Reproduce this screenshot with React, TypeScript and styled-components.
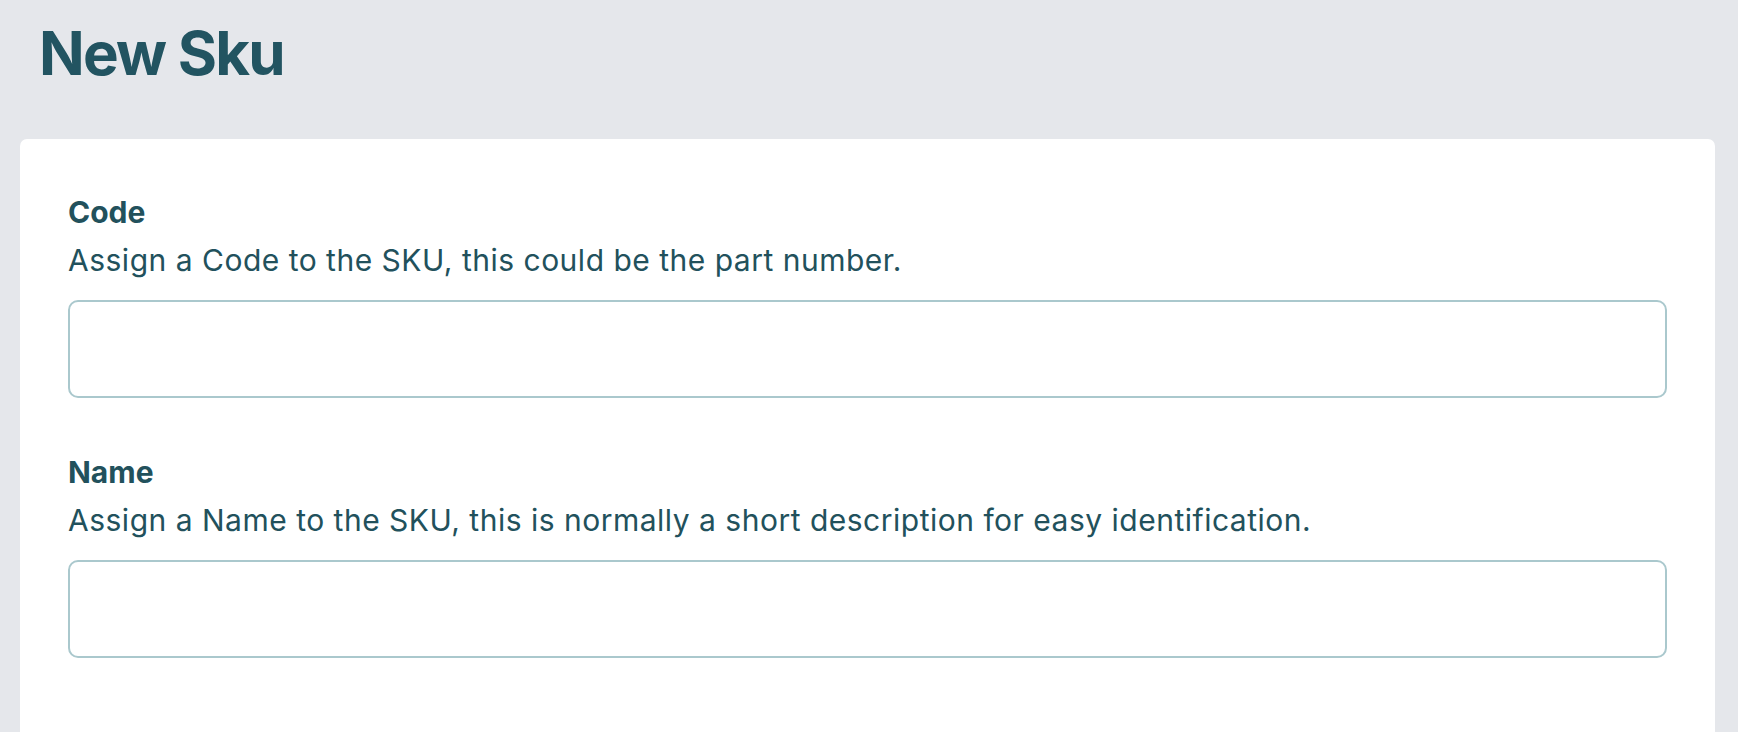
import styled, { createGlobalStyle } from 'styled-components'

const GlobalStyle = createGlobalStyle`
  html, body {
    margin: 0;
    padding: 0;
    height: 100%;
    background: #e5e7eb;
  }
  #root {
    height: 100%;
  }
  * {
    box-sizing: border-box;
  }
`

const Page = styled.main`
  min-height: 100vh;
  display: flex;
  flex-direction: column;
  padding: 17px 23px 0 20px;
  font-family: Inter, 'Noto Sans', sans-serif;
  color: #22515c;
`

const Title = styled.h1`
  margin: 0 0 50px;
  padding-left: 19px;
  font-size: 60px;
  line-height: 72px;
  font-weight: 700;
  letter-spacing: -1.8px;
  color: #225461;
`

const Card = styled.section`
  flex-grow: 1;
  background: #fff;
  border-radius: 7px 7px 0 0;
  padding: 51px 48px 0;
  display: flex;
  flex-direction: column;
  gap: 52px;
`

const Field = styled.label`
  display: flex;
  flex-direction: column;
  > strong {
    font-size: 30px;
    line-height: 44px;
    font-weight: 700;
  }
  > span {
    margin-top: 4px;
    font-size: 30px;
    line-height: 44px;
    font-weight: 400;
    letter-spacing: 0.5px;
  }
  > input {
    margin-top: 18px;
    height: 98px;
    width: 100%;
    border: 2px solid #aac8cd;
    border-radius: 10px;
    background: #fff;
    font: inherit;
    font-size: 30px;
    padding: 0 20px;
    outline: none;
  }
`

function App() {
  return (
    <>
      <GlobalStyle />
      <Page>
        <Title>New Sku</Title>
        <Card>
          <Field>
            <strong>Code</strong>
            <span>Assign a Code to the SKU, this could be the part number.</span>
            <input type="text" />
          </Field>
          <Field>
            <strong>Name</strong>
            <span>Assign a Name to the SKU, this is normally a short description for easy identification.</span>
            <input type="text" />
          </Field>
        </Card>
      </Page>
    </>
  )
}

export default App
